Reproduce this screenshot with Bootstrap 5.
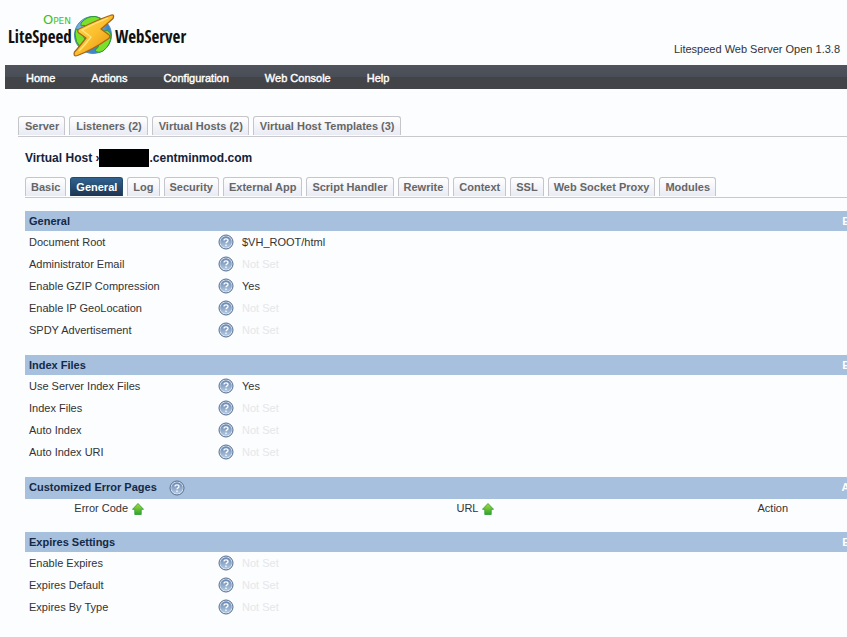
<!DOCTYPE html>
<html lang="en">
<head>
<meta charset="utf-8">
<meta name="viewport" content="width=device-width, initial-scale=1">
<title>LiteSpeed Web Server - Virtual Host</title>
<link rel="stylesheet" href="https://cdn.jsdelivr.net/npm/bootstrap@5.3.0/dist/css/bootstrap.min.css">
<style>
body{background:#fbfdff;color:#333;font:11px/22px "Liberation Sans",Arial,sans-serif}
a{text-decoration:none}
.site-head{height:65px;padding:10px 7px 0 8px}
.brand{color:#111;font:17px/22px "Liberation Sans Narrow","Arial Narrow","Open Sans Condensed","Liberation Sans",sans-serif;height:48px}
.brand-left{width:65px;padding-top:3px}
.brand-open{font:13px/13px "DejaVu Sans",sans-serif;font-variant:small-caps;color:#3fc11a;text-align:right;padding-right:2px}
.brand-right{padding-top:16px}
.version{line-height:14px;margin-top:32px}
.mainbar{margin-left:5px;padding-left:21px;height:24px;gap:36px;background:linear-gradient(#50535b,#494d57 50%,#434447 51%,#434447)}
.mainbar a{color:#fff;line-height:26px;-webkit-text-stroke:.4px #fff}
.tabset{gap:4px;border-bottom:1px solid #c9c9cd;padding-bottom:1px}
.tabset a{color:#666;font-weight:bold;line-height:18px;padding:0 5px 0 6px;border:1px solid #c6c6ca;border-bottom:0;border-radius:3px 3px 0 0;background:linear-gradient(#fff,#e9ebf4);white-space:nowrap}
.tabs-top{margin:27px 0 0 18px}
.tabs-sub a{padding:0 5px}
.tabs-sub a.current{color:#fff;border-color:#234a6d;background:linear-gradient(#2f6390,#1f3450)}
.inner{margin-left:25px}
h1{font-size:12px;line-height:18px;font-weight:bold;color:#152238;margin:12px 0 10px}
.masked{width:50px;height:18px;background:#000}
.panel{margin:0 -20px 14px 0}
.panel-head{background:#a6c0de;color:#152946;line-height:20px;padding:0 4px}
.panel-head h2{font-size:11px;line-height:20px;font-weight:bold;margin:0}
.panel-head a{color:#fff;font-weight:bold}
.panel-first{margin-top:13px}
.head-tall{height:22px}
.settings,.listing{width:100%;border-collapse:collapse}
.settings th{font-weight:normal;width:193px;padding:0 4px}
.settings td{padding:0}
.settings .help-cell{width:24px}
.unset{color:#e6e7e9}
.help{display:block;width:16px;height:16px;padding:0;border:0;background:none}
.help svg,.arrow{display:block}
.listing th{font-weight:normal;line-height:19px;padding:0}
</style>
<script src="https://cdn.jsdelivr.net/npm/bootstrap@5.3.0/dist/js/bootstrap.bundle.min.js"></script>
</head>
<body class="overflow-x-hidden">
<svg width="0" height="0" class="position-absolute" aria-hidden="true">
<defs>
<linearGradient id="hg" x2="0" y2="1"><stop stop-color="#6585b0"/><stop offset="1" stop-color="#b3cae3"/></linearGradient>
<linearGradient id="gg" x2="0" y2="1"><stop stop-color="#a4dd3c"/><stop offset="1" stop-color="#2fa32c"/></linearGradient>
<linearGradient id="bolt" x2="1" y2="1"><stop stop-color="#ffdc4d"/><stop offset=".5" stop-color="#fbbe2c"/><stop offset="1" stop-color="#e08a0e"/></linearGradient>
<radialGradient id="sea" cx=".4" cy=".3"><stop stop-color="#b5e4fb"/><stop offset="1" stop-color="#3d86c8"/></radialGradient>
</defs>
<symbol id="q" viewBox="0 0 16 16"><circle cx="8" cy="8" r="7" fill="#dfe8f2" stroke="#536a8c"/><circle cx="8" cy="8" r="5.800" fill="url(#hg)"/><path d="M6 6.500Q6 4.800 8 4.800t2 1.600Q10 7.300 9 7.900T8 9.300M8 10.500v1.400" fill="none" stroke="#fff" stroke-width="1.300"/></symbol>
<symbol id="up" viewBox="0 0 12 12"><path d="M6 .5 11.500 6.300H9.200v5.200H2.800V6.300H.5z" fill="url(#gg)" stroke="#35a33a" stroke-width=".9" stroke-linejoin="round"/></symbol>
</svg>

<header class="site-head d-flex justify-content-between align-items-start">
  <a class="brand d-flex align-items-start" href="#">
    <span class="brand-left"><span class="brand-open d-block">Open</span><span class="d-block">LiteSpeed</span></span>
    <svg width="42" height="44" viewBox="0 0 42 44" aria-hidden="true" class="mt-1">
      <circle cx="20" cy="21" r="18.500" fill="url(#sea)" stroke="#4e8fc4"/>
      <path d="M8 9Q14 2 22 2.500 29 4 29 8 24 8 22 11 19 15 14 13 11 10 8 12zM3 15Q8 16 9 20 14 26 13 33 10 36 8 34 2 28 2 20zM29 18Q36 14 38 21 38 31 30 37 24 40 22 36 27 33 25 29 25 24 29 23z" fill="#7be02c" stroke="#2f9a25"/>
      <path d="M37 1.500Q24 6 7 14.500q-4 2-1 4.500l7 5Q6 33 1.500 38q-1.500 5 3 3.500Q19 36 35 25q3.500-2.500.5-4.500L28 15Q34 10 40 4.500q2-5-3-3z" fill="url(#bolt)" stroke="#a8651a" stroke-width="1.300" stroke-linejoin="round"/>
      <path d="M35 4Q22 9 9 16l9 7Q12 31 6 37" fill="none" stroke="#ffe583" stroke-width="1.300"/>
    </svg>
    <span class="brand-right">WebServer</span>
  </a>
  <span class="version">Litespeed Web Server Open 1.3.8</span>
</header>

<nav class="mainbar d-flex" aria-label="Main">
  <a href="#">Home</a><a href="#">Actions</a><a href="#">Configuration</a><a href="#">Web Console</a><a href="#">Help</a>
</nav>

<nav class="tabset tabs-top d-flex" aria-label="Configuration">
  <a href="#">Server</a><a href="#">Listeners (2)</a><a href="#">Virtual Hosts (2)</a><a href="#">Virtual Host Templates (3)</a>
</nav>

<main class="inner">
  <h1 class="d-flex"><span>Virtual Host ›</span><span class="masked"></span><span>.centminmod.com</span></h1>
  <nav class="tabset tabs-sub d-flex" aria-label="Virtual host">
    <a href="#">Basic</a><a href="#" class="current" aria-current="page">General</a><a href="#">Log</a><a href="#">Security</a><a href="#">External App</a><a href="#">Script Handler</a><a href="#">Rewrite</a><a href="#">Context</a><a href="#">SSL</a><a href="#">Web Socket Proxy</a><a href="#">Modules</a>
  </nav>

  <section class="panel panel-first">
    <div class="panel-head d-flex justify-content-between"><h2>General</h2><a href="#">Edit</a></div>
    <table class="settings">
      <tr><th scope="row">Document Root</th><td class="help-cell"><button class="help" aria-label="Help"><svg width="16" height="16"><use href="#q"/></svg></button></td><td>$VH_ROOT/html</td></tr>
      <tr><th scope="row">Administrator Email</th><td class="help-cell"><button class="help" aria-label="Help"><svg width="16" height="16"><use href="#q"/></svg></button></td><td class="unset">Not Set</td></tr>
      <tr><th scope="row">Enable GZIP Compression</th><td class="help-cell"><button class="help" aria-label="Help"><svg width="16" height="16"><use href="#q"/></svg></button></td><td>Yes</td></tr>
      <tr><th scope="row">Enable IP GeoLocation</th><td class="help-cell"><button class="help" aria-label="Help"><svg width="16" height="16"><use href="#q"/></svg></button></td><td class="unset">Not Set</td></tr>
      <tr><th scope="row">SPDY Advertisement</th><td class="help-cell"><button class="help" aria-label="Help"><svg width="16" height="16"><use href="#q"/></svg></button></td><td class="unset">Not Set</td></tr>
    </table>
  </section>

  <section class="panel">
    <div class="panel-head d-flex justify-content-between"><h2>Index Files</h2><a href="#">Edit</a></div>
    <table class="settings">
      <tr><th scope="row">Use Server Index Files</th><td class="help-cell"><button class="help" aria-label="Help"><svg width="16" height="16"><use href="#q"/></svg></button></td><td>Yes</td></tr>
      <tr><th scope="row">Index Files</th><td class="help-cell"><button class="help" aria-label="Help"><svg width="16" height="16"><use href="#q"/></svg></button></td><td class="unset">Not Set</td></tr>
      <tr><th scope="row">Auto Index</th><td class="help-cell"><button class="help" aria-label="Help"><svg width="16" height="16"><use href="#q"/></svg></button></td><td class="unset">Not Set</td></tr>
      <tr><th scope="row">Auto Index URI</th><td class="help-cell"><button class="help" aria-label="Help"><svg width="16" height="16"><use href="#q"/></svg></button></td><td class="unset">Not Set</td></tr>
    </table>
  </section>

  <section class="panel">
    <div class="panel-head head-tall d-flex justify-content-between"><div class="d-flex gap-2"><h2 class="me-1">Customized Error Pages</h2><button class="help align-self-center" aria-label="Help"><svg width="16" height="16"><use href="#q"/></svg></button></div><a href="#">Add</a></div>
    <table class="listing">
      <colgroup><col style="width:20%"><col style="width:67%"><col></colgroup>
      <thead><tr>
        <th scope="col"><span class="d-flex justify-content-center align-items-center gap-1">Error Code <svg class="arrow" width="12" height="12"><use href="#up"/></svg></span></th>
        <th scope="col"><span class="d-flex justify-content-center align-items-center gap-1">URL <svg class="arrow" width="12" height="12"><use href="#up"/></svg></span></th>
        <th scope="col">Action</th>
      </tr></thead>
    </table>
  </section>

  <section class="panel">
    <div class="panel-head d-flex justify-content-between"><h2>Expires Settings</h2><a href="#">Edit</a></div>
    <table class="settings">
      <tr><th scope="row">Enable Expires</th><td class="help-cell"><button class="help" aria-label="Help"><svg width="16" height="16"><use href="#q"/></svg></button></td><td class="unset">Not Set</td></tr>
      <tr><th scope="row">Expires Default</th><td class="help-cell"><button class="help" aria-label="Help"><svg width="16" height="16"><use href="#q"/></svg></button></td><td class="unset">Not Set</td></tr>
      <tr><th scope="row">Expires By Type</th><td class="help-cell"><button class="help" aria-label="Help"><svg width="16" height="16"><use href="#q"/></svg></button></td><td class="unset">Not Set</td></tr>
    </table>
  </section>
</main>
</body>
</html>
